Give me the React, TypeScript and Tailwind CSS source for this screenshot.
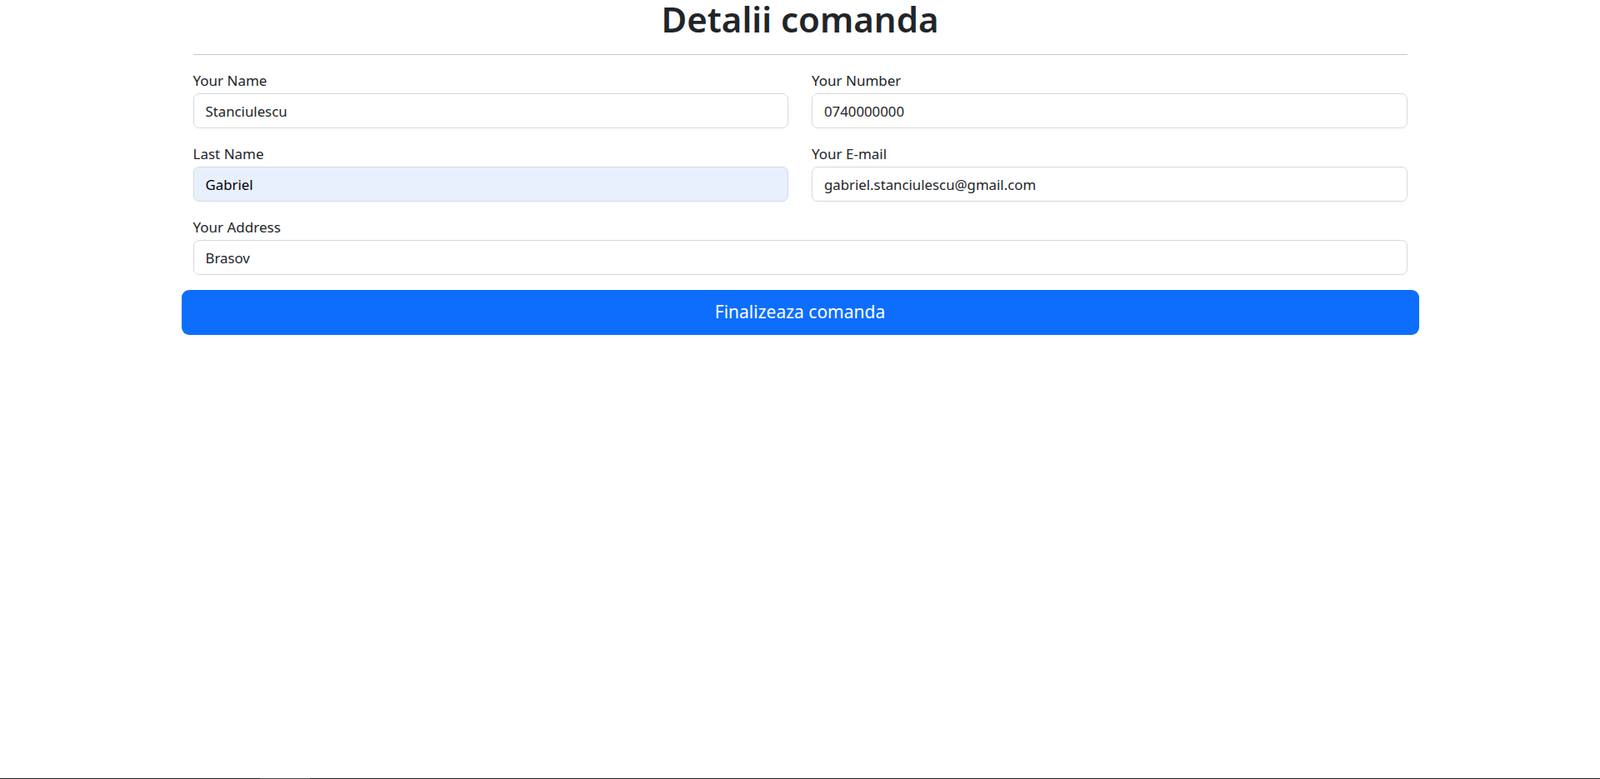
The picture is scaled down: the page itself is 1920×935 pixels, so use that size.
import React from 'react';

interface FieldProps {
  label: string;
  value: string;
  autofilled?: boolean;
  wide?: boolean;
}

const Field: React.FC<FieldProps> = ({ label, value, autofilled, wide }) => {
  return (
    <div className={wide ? 'col-span-2' : ''}>
      <label className="block text-[17px] leading-[22px] mb-[4px] text-[#212529]">{label}</label>
      <input
        type="text"
        value={value}
        readOnly
        className={
          autofilled
            ? 'block w-full h-[42px] px-[14px] text-[16.8px] text-[#000000] bg-[#e8f0fe] border border-[#d3d9e2] rounded-[7px] outline-none'
            : 'block w-full h-[42px] px-[14px] text-[16.8px] text-[#212529] bg-white border border-[#d5d8dc] rounded-[7px] outline-none'
        }
      />
    </div>
  );
};

const App: React.FC = () => {
  // Campurile comenzii
  const fields = [
    { label: 'Your Name', value: 'Stanciulescu' },
    { label: 'Your Number', value: '0740000000' },
    { label: 'Last Name', value: 'Gabriel', autofilled: true },
    { label: 'Your E-mail', value: 'gabriel.stanciulescu@gmail.com' }
  ];

  return (
    <div className="h-[935px] bg-white flex flex-col font-['Noto_Sans','Open_Sans',sans-serif] overflow-hidden">
      <div className="flex-1">
        <div className="w-[1485px] mx-auto">
          <h1 className="text-center text-[42px] leading-[46px] font-semibold text-[#212529]">
            Detalii comanda
          </h1>
          <div className="px-[14px]">
            <hr className="mt-[19px] border-t border-[#c8c9ca]" />
            <div className="grid grid-cols-2 gap-x-[28px] gap-y-[20px] mt-[20px]">
              {fields.map(f => (
                <Field key={f.label} label={f.label} value={f.value} autofilled={f.autofilled} />
              ))}
              <Field label="Your Address" value="Brasov" wide />
            </div>
          </div>
          <button
            type="button"
            className="block w-full h-[54px] mt-[18px] rounded-[9px] bg-[#0d6efd] text-white text-[21px]"
          >
            Finalizeaza comanda
          </button>
        </div>
      </div>
      <div className="h-[1px] flex">
        <div className="w-[312px] bg-[#202020]" />
        <div className="w-[60px] bg-[#4a4a4a]" />
        <div className="flex-1 bg-[#202020]" />
      </div>
    </div>
  );
};

export default App;
